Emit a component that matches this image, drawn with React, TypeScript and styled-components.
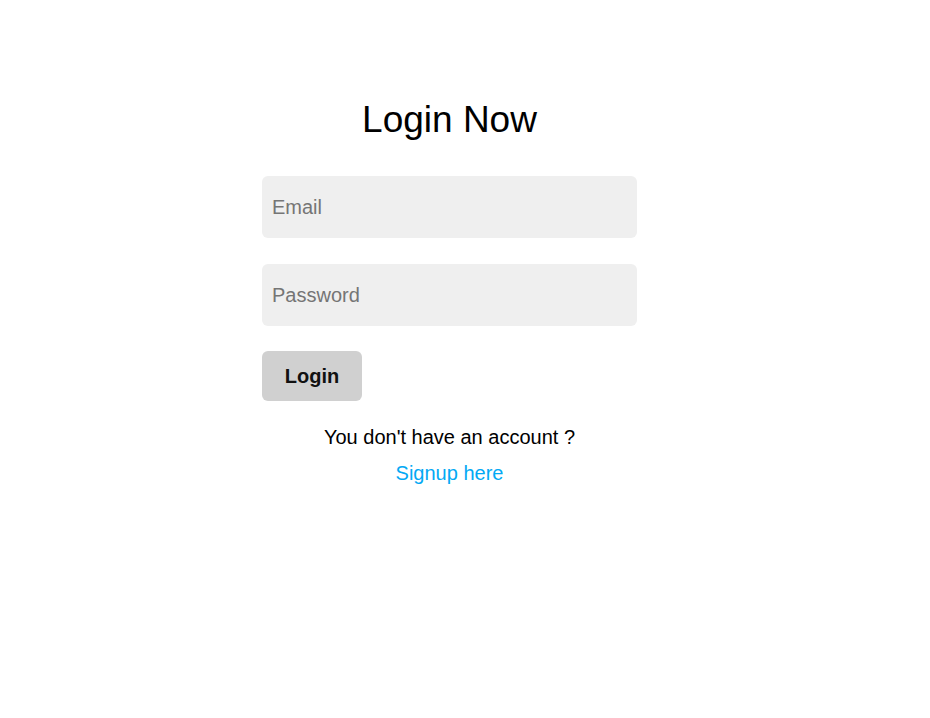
import React from "react";
import styled, { createGlobalStyle } from "styled-components";

const Global = createGlobalStyle`
  html, body { margin: 0; padding: 0; background: #ffffff; }
  body { font-family: "Liberation Sans", Arial, sans-serif; }
  * { box-sizing: border-box; }
`;

const Page = styled.main`
  display: flex;
  justify-content: center;
  padding: 98px 31px 0 0;
  min-height: 718px;
`;

const Form = styled.form`
  width: 375px;
  display: flex;
  flex-direction: column;
`;

const Title = styled.h1`
  margin: 0 0 35px;
  font-size: 37px;
  font-weight: 400;
  line-height: 43px;
  text-align: center;
  color: #000;
`;

const Input = styled.input`
  height: 62px;
  width: 100%;
  border: none;
  border-radius: 6px;
  background: #efefef;
  padding: 0 10px;
  margin-bottom: 26px;
  font-family: "Liberation Sans", Arial, sans-serif;
  font-size: 20px;
  color: #000;
  outline: none;
  &::placeholder { color: #757575; }
`;

const Button = styled.button`
  align-self: flex-start;
  width: 100px;
  height: 50px;
  margin-top: -1px;
  border: none;
  border-radius: 6px;
  background: #d0d0d0;
  font-family: "Liberation Sans", Arial, sans-serif;
  font-size: 20px;
  font-weight: 700;
  color: #111;
  cursor: pointer;
`;

const Note = styled.p`
  margin: 25px 0 0;
  font-size: 20px;
  line-height: 23px;
  text-align: center;
  color: #000;
`;

const Link = styled.a`
  margin-top: 13px;
  align-self: center;
  font-size: 20px;
  line-height: 23px;
  color: #03a9f4;
  text-decoration: none;
`;

export default function App() {
  return (
    <>
      <Global />
      <Page>
        <Form onSubmit={(e) => e.preventDefault()}>
          <Title>Login Now</Title>
          <Input type="email" placeholder="Email" />
          <Input type="password" placeholder="Password" />
          <Button type="submit">Login</Button>
          <Note>You don't have an account ?</Note>
          <Link href="#">Signup here</Link>
        </Form>
      </Page>
    </>
  );
}
